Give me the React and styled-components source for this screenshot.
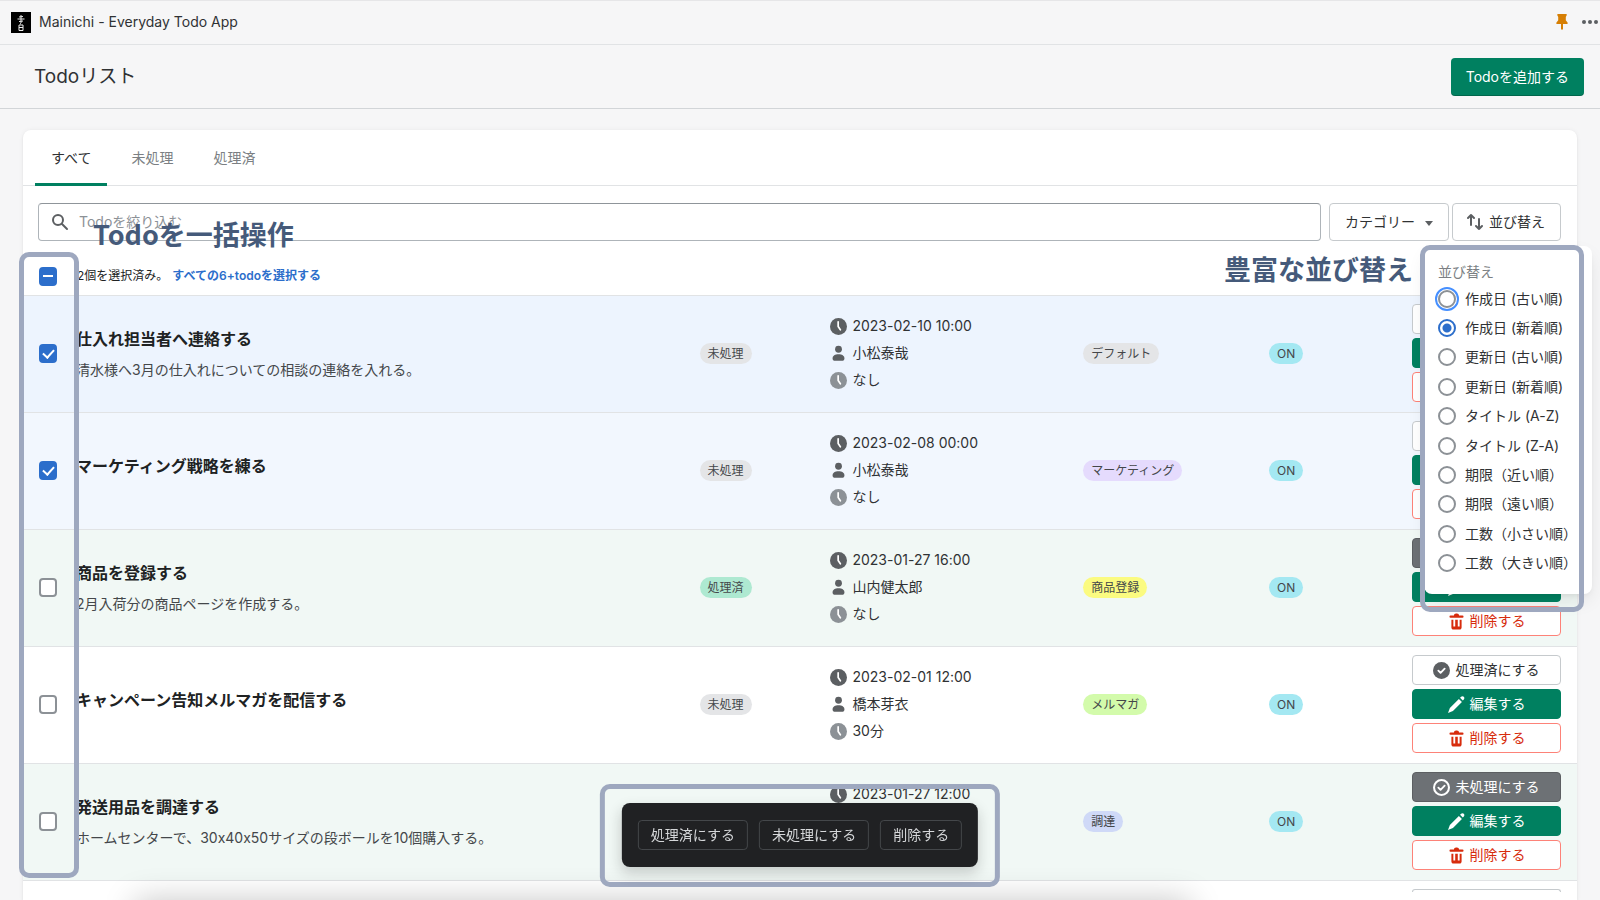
import { useState } from "react";
import styled, { createGlobalStyle, css } from "styled-components";

const tabs = ["すべて", "未処理", "処理済"];

const sortOptions = [
  "作成日 (古い順)",
  "作成日 (新着順)",
  "更新日 (古い順)",
  "更新日 (新着順)",
  "タイトル (A-Z)",
  "タイトル (Z-A)",
  "期限（近い順）",
  "期限（遠い順）",
  "工数（小さい順）",
  "工数（大きい順）",
];

const todos = [
  {
    id: 1,
    title: "仕入れ担当者へ連絡する",
    description: "清水様へ3月の仕入れについての相談の連絡を入れる。",
    done: false,
    deadline: "2023-02-10 10:00",
    assignee: "小松泰哉",
    time: "なし",
    category: "デフォルト",
    color: "#e4e5e7",
  },
  {
    id: 2,
    title: "マーケティング戦略を練る",
    done: false,
    deadline: "2023-02-08 00:00",
    assignee: "小松泰哉",
    time: "なし",
    category: "マーケティング",
    color: "#e5dbfd",
  },
  {
    id: 3,
    title: "商品を登録する",
    description: "2月入荷分の商品ページを作成する。",
    done: true,
    deadline: "2023-01-27 16:00",
    assignee: "山内健太郎",
    time: "なし",
    category: "商品登録",
    color: "#fbfb80",
  },
  {
    id: 4,
    title: "キャンペーン告知メルマガを配信する",
    done: false,
    deadline: "2023-02-01 12:00",
    assignee: "橋本芽衣",
    time: "30分",
    category: "メルマガ",
    color: "#d3fbab",
  },
  {
    id: 5,
    title: "発送用品を調達する",
    description: "ホームセンターで、30x40x50サイズの段ボールを10個購入する。",
    done: true,
    deadline: "2023-01-27 12:00",
    assignee: "山内健太郎",
    time: "なし",
    category: "調達",
    color: "#cfd9f7",
  },
];

function ClockIcon({ color = "#5c5f62" }) {
  return (
    <svg width="17" height="17" viewBox="0 0 20 20" aria-hidden="true">
      <circle cx="10" cy="10" r="10" fill={color} />
      <path d="M9.6 4.5v5.6l2.6 3.8" fill="none" stroke="#fff" strokeWidth="2" strokeLinecap="round" strokeLinejoin="round" />
    </svg>
  );
}

function PersonIcon() {
  return (
    <svg width="17" height="17" viewBox="0 0 20 20" aria-hidden="true">
      <circle cx="10" cy="5" r="4" fill="#5c5f62" />
      <path d="M3 16c0-3.400 3-5 7-5s7 1.600 7 5c0 1.500-.8 2.500-2 2.500H5c-1.200 0-2-1-2-2.500z" fill="#5c5f62" />
    </svg>
  );
}

function SearchIcon() {
  return (
    <svg width="18" height="18" viewBox="0 0 18 18" aria-hidden="true">
      <circle cx="7" cy="7" r="5" fill="none" stroke="#5c5f62" strokeWidth="2" />
      <path d="M11 11l5 5" stroke="#5c5f62" strokeWidth="2" strokeLinecap="round" />
    </svg>
  );
}

function SortIcon() {
  return (
    <svg width="16" height="18" viewBox="0 0 16 18" fill="none" stroke="#5c5f62" strokeWidth="2" strokeLinecap="round" strokeLinejoin="round" aria-hidden="true">
      <path d="M4 12V2M1 5l3-3 3 3" />
      <path d="M12 6v10M9 13l3 3 3-3" />
    </svg>
  );
}

function CheckCircleIcon({ outline }) {
  return (
    <svg width="17" height="17" viewBox="0 0 20 20" fill="none" aria-hidden="true">
      {outline ? (
        <circle cx="10" cy="10" r="8.800" stroke="#fff" strokeWidth="2.400" />
      ) : (
        <circle cx="10" cy="10" r="10" fill="#5c5f62" />
      )}
      <path d="M6.300 10.200l2.600 2.600 4.800-5" stroke="#fff" strokeWidth="2.200" strokeLinecap="round" strokeLinejoin="round" />
    </svg>
  );
}

function PencilIcon() {
  return (
    <svg width="17" height="17" viewBox="0 0 20 20" fill="#fff" aria-hidden="true">
      <path d="M14.200 2.200l1.200-1.200c.9-.9 2.300-.9 3.200 0 .9.900.9 2.300 0 3.200l-1.200 1.200z" />
      <path d="M12.800 3.600l3.600 3.600L5.800 17.600 0 20l2.200-5.800z" />
    </svg>
  );
}

function TrashIcon() {
  return (
    <svg width="17" height="17" viewBox="0 0 20 20" fill="#d72c0d" aria-hidden="true">
      <path d="M7 3c0-1.500 1-2.500 2.500-2.500h1c1.500 0 2.500 1 2.500 2.500h4a1.200 1.200 0 0 1 0 2.600H3A1.200 1.200 0 0 1 3 3z" />
      <path d="M4 8h2.300v8h2.200V8h3v8h2.200V8H16v9c0 1.500-1 2.500-2.500 2.500h-7C5 19.500 4 18.500 4 17z" />
    </svg>
  );
}

function Logo() {
  return (
    <svg width="20" height="21" viewBox="0 0 20 21" aria-hidden="true">
      <rect width="20" height="21" />
      <g fill="none" stroke="#eee">
        <path d="M10 3v8M6.500 7h7M8 5l4-.5M8 9.500l4-.5" />
        <path d="M8 13h4v5.500H8zM8 15.500h4M9 12l1-.5" />
      </g>
    </svg>
  );
}

function PinIcon() {
  return (
    <svg width="12" height="16" viewBox="0 0 12 16" fill="#d67f05" aria-hidden="true">
      <path d="M2 0h8c.6 0 .8.400.8.900L9.800 3v3.300l1.700 2.200c.5.600.3 1.500-.5 1.500H1C.2 10 0 9.100.5 8.500l1.700-2.200V3L1.200.9C1.200.4 1.400 0 2 0z" />
      <path d="M5 9h2v6l-1 1-1-1z" />
    </svg>
  );
}

function DotsIcon() {
  return (
    <svg width="16" height="4" viewBox="0 0 16 4" fill="#5c5f62" aria-hidden="true">
      <circle cx="2" cy="2" r="2" />
      <circle cx="8" cy="2" r="2" />
      <circle cx="14" cy="2" r="2" />
    </svg>
  );
}

function TodoRow({ todo, selected, focused, onToggle }) {
  return (
    <Row $done={todo.done} $selected={selected} $focused={focused}>
      <CheckBox
        type="checkbox"
        aria-label={todo.title}
        checked={selected}
        onChange={onToggle}
      />
      <div>
        <TodoTitle>{todo.title}</TodoTitle>
        {todo.description && <Description>{todo.description}</Description>}
      </div>
      <div>
        <Badge $color={todo.done ? "#aee9d1" : "#e4e5e7"}>
          {todo.done ? "処理済" : "未処理"}
        </Badge>
      </div>
      <InfoList>
        <InfoItem>
          <ClockIcon />
          {todo.deadline}
        </InfoItem>
        <InfoItem>
          <PersonIcon />
          {todo.assignee}
        </InfoItem>
        <InfoItem>
          <ClockIcon color="#8c9196" />
          {todo.time}
        </InfoItem>
      </InfoList>
      <div>
        <Badge $color={todo.color}>{todo.category}</Badge>
      </div>
      <div>
        <Badge $color="#a4e8f2">ON</Badge>
      </div>
      <Actions>
        <ActionButton type="button" $variant={todo.done ? "dark" : "plain"}>
          <CheckCircleIcon outline={todo.done} />
          {todo.done ? "未処理にする" : "処理済にする"}
        </ActionButton>
        <ActionButton type="button" $variant="primary">
          <PencilIcon />
          編集する
        </ActionButton>
        <ActionButton type="button" $variant="danger">
          <TrashIcon />
          削除する
        </ActionButton>
      </Actions>
    </Row>
  );
}

function App() {
  const [tab, setTab] = useState(tabs[0]);
  const [sort, setSort] = useState(sortOptions[1]);
  const [selectedIds, setSelectedIds] = useState([1, 2]);

  const toggle = (id) => {
    setSelectedIds((prev) =>
      prev.includes(id) ? prev.filter((item) => item !== id) : [...prev, id]
    );
  };

  return (
    <Page>
      <GlobalStyle />
      <TopBar>
        <Logo />
        <AppName>Mainichi - Everyday Todo App</AppName>
        <IconButton type="button" aria-label="ピン留め">
          <PinIcon />
        </IconButton>
        <IconButton type="button" aria-label="メニュー">
          <DotsIcon />
        </IconButton>
      </TopBar>
      <Header>
        <PageTitle>Todoリスト</PageTitle>
        <AddButton type="button">Todoを追加する</AddButton>
      </Header>
      <Card>
        <Tabs>
          {tabs.map((name) => (
            <Tab key={name} type="button" $active={name === tab} onClick={() => setTab(name)}>
              {name}
            </Tab>
          ))}
        </Tabs>
        <Filters>
          <SearchBox>
            <SearchIcon />
            <SearchInput type="text" aria-label="Todoを絞り込む" placeholder="Todoを絞り込む" />
          </SearchBox>
          <FilterButtons>
            <FilterButton type="button">
              カテゴリー
              <Caret />
            </FilterButton>
            <SortArea>
              <SortButton type="button">
                <SortIcon />
                並び替え
              </SortButton>
              <Popover>
                <SortLegend>並び替え</SortLegend>
                <SortList>
                  {sortOptions.map((option, index) => (
                    <SortLabel key={option}>
                      <Radio
                        type="radio"
                        name="sort"
                        checked={option === sort}
                        $focused={index === 0}
                        onChange={() => setSort(option)}
                      />
                      {option}
                    </SortLabel>
                  ))}
                </SortList>
              </Popover>
              <SortFrame />
              <SortCaption>豊富な並び替え</SortCaption>
            </SortArea>
          </FilterButtons>
        </Filters>
        <ListArea>
          <BulkHeader>
            <BulkCheckBox type="checkbox" aria-label="すべて選択" defaultChecked />
            <SelectedCount>{selectedIds.length}個を選択済み。</SelectedCount>
            <SelectAll href="#all">すべての6+todoを選択する</SelectAll>
          </BulkHeader>
          <TodoList>
            {todos.map((todo, index) => (
              <TodoRow
                key={todo.id}
                todo={todo}
                selected={selectedIds.includes(todo.id)}
                focused={index === 0}
                onToggle={() => toggle(todo.id)}
              />
            ))}
          </TodoList>
          <NextRow>
            <NextRowEdge />
          </NextRow>
          <BulkFrame />
          <BulkCaption>Todoを一括操作</BulkCaption>
        </ListArea>
      </Card>
      <BottomShade />
      <BulkBarFrame>
        <BulkBar>
          <BulkButton type="button">処理済にする</BulkButton>
          <BulkButton type="button">未処理にする</BulkButton>
          <BulkButton type="button">削除する</BulkButton>
        </BulkBar>
      </BulkBarFrame>
    </Page>
  );
}

export default App;

const GlobalStyle = createGlobalStyle`
  * {
    box-sizing: border-box;
  }

  body {
    margin: 0;
    background-color: #f6f6f7;
    color: #202223;
    font-family: Inter, "Noto Sans CJK JP", sans-serif;
    font-size: 14px;
    font-variant-ligatures: no-contextual;
    line-height: 20px;
  }

  button, input {
    font: inherit;
    color: inherit;
  }

  h1, h2, p, ul {
    margin: 0;
    padding: 0;
  }
`;

const Page = styled.div`
  position: relative;
  height: 100vh;
  overflow: hidden;
  border-top: 1px solid #e6e6e8;
`;

const TopBar = styled.div`
  display: flex;
  align-items: center;
  gap: 8px;
  height: 44px;
  padding: 0 2px 1px 11px;
  border-bottom: 1px solid #e1e3e5;
`;

const AppName = styled.p`
  flex: 1;
  color: #303234;
`;

const IconButton = styled.button`
  display: flex;
  padding: 0;
  margin-left: 6px;
  border: 0;
  background: none;
`;

const Header = styled.header`
  display: flex;
  justify-content: space-between;
  align-items: center;
  height: 64px;
  padding: 0 16px 0 34px;
  border-bottom: 1px solid #d2d5d8;
`;

const PageTitle = styled.h1`
  color: #303234;
  font-size: 19px;
  font-weight: 400;
  line-height: 28px;
`;

const AddButton = styled.button`
  height: 38px;
  padding: 0 15px;
  border: 0;
  border-radius: 4px;
  background-color: #008060;
  box-shadow: inset 0 -1px 0 rgba(0, 0, 0, 0.2);
  color: #fff;
`;

const Card = styled.main`
  margin: 21px 23px 0;
  border-radius: 8px 8px 0 0;
  background-color: #fff;
  box-shadow: 0 0 5px rgba(23, 24, 24, 0.05), 0 1px 2px rgba(0, 0, 0, 0.08);
`;

const Tabs = styled.div`
  display: flex;
  gap: 8px;
  height: 56px;
  padding: 0 12px;
  border-bottom: 1px solid #e1e3e5;
`;

const Tab = styled.button`
  height: 56px;
  padding: 3px 16px 0;
  border: 0;
  border-bottom: 3px solid ${({ $active }) => ($active ? "#008060" : "transparent")};
  border-radius: 2px 2px 0 0;
  background: none;
  color: ${({ $active }) => ($active ? "#303234" : "#7b7f83")};
`;

const Filters = styled.div`
  display: flex;
  gap: 8px;
  padding: 17px 16px 0 15px;
`;

const SearchBox = styled.label`
  display: flex;
  flex: 1;
  align-items: center;
  gap: 10px;
  height: 38px;
  padding: 0 12px;
  border: 1px solid #aeb4b9;
  border-top-color: #8f959a;
  border-radius: 4px;
`;

const SearchInput = styled.input`
  flex: 1;
  padding: 0;
  border: 0;
  outline: 0;
  background: none;

  &::placeholder {
    color: #8c9196;
    opacity: 1;
  }
`;

const FilterButtons = styled.div`
  display: flex;
  gap: 3px;
`;

const FilterButton = styled.button`
  display: flex;
  align-items: center;
  gap: 6px;
  height: 38px;
  padding: 0 15px;
  border: 1px solid #c6cacd;
  border-radius: 4px;
  background-color: #fff;
  color: #303234;
`;

const SortButton = styled(FilterButton)`
  padding-left: 14px;
`;

const Caret = styled.span`
  margin: 2px 0 0 4px;
  border: 4px solid transparent;
  border-top: 5px solid #5c5f62;
  border-bottom: 0;
`;

const SortArea = styled.div`
  position: relative;
`;

const Popover = styled.div`
  position: absolute;
  z-index: 2;
  top: 43px;
  right: -31px;
  width: 168px;
  padding: 16px 14px;
  border-radius: 8px;
  background-color: #fff;
  box-shadow: 0 3px 6px -3px rgba(23, 24, 24, 0.08), 0 8px 20px -4px rgba(23, 24, 24, 0.12);
  white-space: nowrap;
`;

const SortLegend = styled.p`
  color: #7b7f83;
`;

const SortList = styled.div`
  display: grid;
  grid-auto-rows: 1fr;
  height: 294px;
  margin-top: 2px;
`;

const SortLabel = styled.label`
  display: flex;
  align-items: center;
  gap: 9px;
  color: #303234;
`;

const Radio = styled.input`
  flex: none;
  appearance: none;
  width: 18px;
  height: 18px;
  margin: 0;
  border: 2px solid #8c9196;
  border-radius: 50%;
  background-color: #fff;

  &:checked {
    border-color: #2c6ecb;
    background: radial-gradient(circle, #2c6ecb 4px, #fff 5px);
  }

  ${({ $focused }) =>
    $focused &&
    css`
      outline: 2px solid #458fff;
      outline-offset: 1px;
    `}
`;

const frame = css`
  border: 5px solid #9ea8bf;
  border-radius: 10px;
  pointer-events: none;
`;

const caption = css`
  position: absolute;
  z-index: 3;
  color: #455a7a;
  font-family: "Noto Sans CJK JP", sans-serif;
  font-size: 27px;
  font-weight: 700;
  line-height: 40px;
  white-space: nowrap;
`;

const SortFrame = styled.div`
  ${frame}
  position: absolute;
  z-index: 3;
  top: 42px;
  right: -23px;
  width: 164px;
  height: 367px;
`;

const SortCaption = styled.p`
  ${caption}
  top: 46px;
  right: 148px;
`;

const ListArea = styled.div`
  position: relative;
`;

const BulkFrame = styled.div`
  ${frame}
  position: absolute;
  z-index: 3;
  top: 11px;
  left: -4px;
  width: 60px;
  height: 626px;
`;

const BulkCaption = styled.p`
  ${caption}
  top: -27px;
  left: 70px;
`;

const BulkHeader = styled.div`
  display: flex;
  align-items: center;
  height: 54px;
  padding: 16px 16px 0;
  font-size: 12px;
`;

const CheckBox = styled.input`
  flex: none;
  appearance: none;
  width: 18px;
  height: 19px;
  margin: 0;
  border: 2px solid #8c9196;
  border-radius: 4px;
  background-color: #fff;

  &:checked {
    border-color: #2c6ecb;
    background-color: #2c6ecb;
  }

  &:checked::after {
    content: "";
    display: block;
    width: 5px;
    height: 9px;
    margin: 1px 0 0 4px;
    border: solid #fff;
    border-width: 0 2px 2px 0;
    transform: rotate(42deg);
  }
`;

const BulkCheckBox = styled(CheckBox)`
  &:checked::after {
    width: 10px;
    height: 2px;
    margin: 6px 2px;
    border: 0;
    background-color: #fff;
    transform: none;
  }
`;

const SelectedCount = styled.p`
  margin: 0 4px 0 20px;
`;

const SelectAll = styled.a`
  color: #2c6ecb;
  font-weight: 600;
  text-decoration: none;
`;

const TodoList = styled.ul`
  list-style: none;
`;

const rowColor = ({ $focused, $selected, $done }) => {
  if ($selected) return $focused ? "#edf4fe" : "#f2f7fe";
  return $done ? "#f1f8f5" : "#fff";
};

const Row = styled.li`
  display: grid;
  grid-template-columns: 37px 624fr 131fr 253fr 186fr 143fr 149px;
  align-items: center;
  padding: 8px 16px 10px;
  border-top: 1px solid #e1e3e5;
  background-color: ${rowColor};
`;

// top edge of the row that continues below the fold
const NextRow = styled.div`
  display: flex;
  justify-content: flex-end;
  padding: 8px 16px 10px;
  border-top: 1px solid #e1e3e5;
`;

const NextRowEdge = styled.div`
  width: 149px;
  height: 3px;
  border: 1px solid #c6cacd;
  border-bottom: 0;
  border-radius: 4px 4px 0 0;
`;

const TodoTitle = styled.h2`
  margin-bottom: 9px;
  font-size: 16px;
  font-weight: 600;
  line-height: 24px;
`;

const Description = styled.p`
  color: #44474a;
`;

const Badge = styled.span`
  display: inline-block;
  padding: 0 8px;
  border-radius: 11px;
  background-color: ${({ $color }) => $color};
  color: #44474a;
  font-size: 12px;
  line-height: 21px;
`;

const InfoList = styled.ul`
  list-style: none;
`;

const InfoItem = styled.li`
  display: flex;
  align-items: center;
  gap: 5px;
  height: 27px;
  color: #303234;
`;

const Actions = styled.div`
  display: grid;
  gap: 4px;
`;

const variants = {
  plain: css`
    border-color: #c6cacd;
    background-color: #fff;
    color: #303234;
  `,
  dark: css`
    border-color: #5c5f62;
    background-color: #6d7175;
    color: #fff;
  `,
  primary: css`
    border-color: #008060;
    background-color: #008060;
    color: #fff;
  `,
  danger: css`
    border-color: #fd8278;
    background-color: #fff;
    color: #d72c0d;
  `,
};

const ActionButton = styled.button`
  display: flex;
  justify-content: center;
  align-items: center;
  gap: 5px;
  height: 30px;
  padding: 0;
  border: 1px solid;
  border-radius: 4px;
  ${({ $variant }) => variants[$variant]}
`;

const BottomShade = styled.div`
  position: fixed;
  z-index: 1;
  top: 100%;
  right: 410px;
  left: 135px;
  height: 40px;
  box-shadow: 0 0 32px rgba(0, 0, 0, 0.22);
`;

const BulkBarFrame = styled.div`
  ${frame}
  position: fixed;
  z-index: 3;
  bottom: 13px;
  left: 50%;
  padding: 14px 17px 15px;
  transform: translateX(-50%);
`;

const BulkBar = styled.div`
  display: flex;
  gap: 11px;
  padding: 17px 16px;
  border-radius: 8px;
  background-color: #202123;
  box-shadow: 0 6px 14px rgba(23, 24, 24, 0.2);
  pointer-events: auto;
`;

const BulkButton = styled.button`
  height: 30px;
  padding: 0 12px;
  border: 1px solid #44474a;
  border-radius: 4px;
  background: none;
  color: #d5d7d9;
  white-space: nowrap;
`;
